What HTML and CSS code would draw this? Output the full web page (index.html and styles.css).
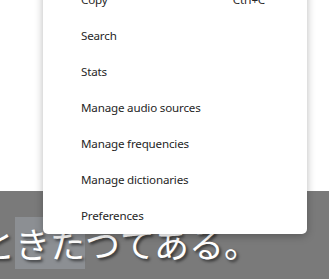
FILE: index.html
```html
<!DOCTYPE html>
<html lang="en">
<head>
<meta charset="utf-8">
<link rel="stylesheet" href="styles.css">
</head>
<body>
<div class="page">
  <div class="top"></div>
  <div class="band">
    <p class="sentence" lang="ja">と<span class="hl">きた</span>つてある。</p>
  </div>
</div>
<ul class="menu">
  <li class="item"><span>Copy</span><span class="key">Ctrl+C</span></li>
  <li class="item"><span>Search</span></li>
  <li class="item"><span>Stats</span></li>
  <li class="item"><span>Manage audio sources</span></li>
  <li class="item"><span>Manage frequencies</span></li>
  <li class="item"><span>Manage dictionaries</span></li>
  <li class="item"><span>Preferences</span></li>
</ul>
</body>
</html>
```
FILE: styles.css
```css
html, body {
  margin: 0;
  padding: 0;
  width: 329px;
  height: 279px;
  overflow: hidden;
  background: #ffffff;
}
.page {
  display: flex;
  flex-direction: column;
  height: 279px;
}
.top {
  height: 191px;
  background: #ffffff;
}
.band {
  flex: 1;
  background: #7a7a7a;
  overflow: hidden;
}
.sentence {
  margin: 26px 0 0 -20px;
  font-family: "Noto Sans CJK JP", sans-serif;
  font-size: 35px;
  line-height: 52px;
  color: #ffffff;
  white-space: nowrap;
  text-shadow: 2px 2px 3px rgba(0, 0, 0, 0.6);
}
.hl {
  display: inline-block;
  height: 52px;
  background: rgba(200, 215, 230, 0.24);
}
.menu {
  position: absolute;
  left: 43px;
  top: -23px;
  width: 264px;
  margin: 0;
  padding: 4px 0 1px;
  list-style: none;
  background: #ffffff;
  border-radius: 0 0 5px 5px;
  box-shadow: 0 2px 8px rgba(0, 0, 0, 0.28);
  font-family: "Noto Sans", sans-serif;
  font-size: 11.6px;
  letter-spacing: -0.18px;
  color: #262626;
}
.item {
  display: flex;
  align-items: center;
  height: 36px;
  padding: 0 42px 0 38px;
}
.key {
  margin-left: auto;
}
```
